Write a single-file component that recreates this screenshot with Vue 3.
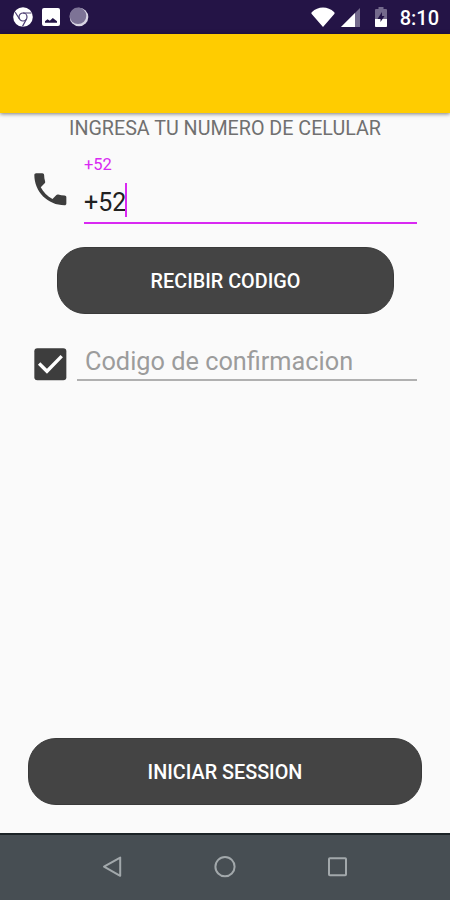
<template>
  <div class="screen">
    <header class="status-bar">
      <div class="status-left">
        <svg width="20" height="20" viewBox="0 0 20 20">
          <circle cx="10" cy="10" r="9.8" fill="#fff" />
          <g fill="none" stroke="#4b3c70" stroke-width="1.2">
            <circle cx="10" cy="10" r="4" />
            <path d="M10 6h8.5M6.5 12L2.2 5.2M13.5 12l-4 7.4" />
          </g>
        </svg>
        <svg width="18" height="18" viewBox="0 0 18 18">
          <rect width="18" height="18" rx="2" fill="#fff" />
          <path d="M3 14.8v-1.500l2.500-2 2.300 1.400 3-2.700 4.200 3.300v1.500z" fill="#241446" />
        </svg>
        <svg width="20" height="20" viewBox="0 0 20 20">
          <circle cx="10" cy="10" r="9.3" fill="#d9d5e4" />
          <circle cx="9" cy="8.8" r="8.3" fill="#7d7396" />
        </svg>
      </div>
      <div class="status-right">
        <svg class="wifi" width="24" height="20" viewBox="0 0 24 20">
          <path
            d="M12 20L.7 7C.2 6.300.3 5.500 1 4.900 4 1.900 7.800.4 12 .4s8 1.500 11 4.500c.7.6.8 1.400.3 2.100z"
            fill="#fff"
          />
        </svg>
        <svg class="signal" width="19" height="19" viewBox="0 0 19 19">
          <path d="M0 19L19 0v19z" fill="#746a8c" />
          <path d="M0 19L14 5V19z" fill="#fff" />
        </svg>
        <svg class="battery" width="12" height="20" viewBox="0 0 12 20">
          <path d="M3.5 0h5v2H11a1 1 0 011 1v16a1 1 0 01-1 1H1a1 1 0 01-1-1V3a1 1 0 011-1h2.5z" fill="#746a8c" />
          <path d="M0 12h12v7a1 1 0 01-1 1H1a1 1 0 01-1-1z" fill="#fff" />
          <path d="M7 5l-4.500 7H5.500v3l4-6H7z" fill="#241446" />
        </svg>
        <span class="clock">8:10</span>
      </div>
    </header>

    <div class="app-bar"></div>

    <main class="content">
      <h1 class="title">INGRESA TU NUMERO DE CELULAR</h1>

      <div class="phone-row">
        <svg class="row-icon" viewBox="0 0 24 24">
          <path
            fill="#3d3d3d"
            d="M6.62 10.79c1.44 2.83 3.76 5.14 6.59 6.59l2.2-2.2c.27-.27.67-.36 1.02-.24 1.12.37 2.33.57 3.57.57.55 0 1 .45 1 1V20c0 .55-.45 1-1 1-9.39 0-17-7.61-17-17 0-.55.45-1 1-1h3.5c.55 0 1 .45 1 1 0 1.25.2 2.45.57 3.57.11.35.03.74-.25 1.02l-2.2 2.2z"
          />
        </svg>
        <div class="phone-field">
          <label class="phone-label">{{ prefix }}</label>
          <div class="phone-value">
            <span>{{ phone }}</span><i class="caret"></i>
          </div>
        </div>
      </div>

      <button class="btn btn-receive">RECIBIR CODIGO</button>

      <div class="code-row">
        <svg class="row-icon" viewBox="0 0 24 24">
          <rect x="3" y="3" width="18" height="18" rx="1.7" fill="#3d3d3d" />
          <path d="M5.7 11.500l4.400 4.400 8.300-8.500" fill="none" stroke="#fff" stroke-width="1.9" />
        </svg>
        <input v-model="code" class="code-input" type="text" placeholder="Codigo de confirmacion" />
      </div>

      <button class="btn btn-login">INICIAR SESSION</button>
    </main>

    <nav class="nav-bar">
      <svg width="22" height="22" viewBox="0 0 22 22">
        <path d="M18.200 1.600v18.200L2 10.700z" />
      </svg>
      <svg width="22" height="22" viewBox="0 0 22 22">
        <circle cx="11" cy="10.7" r="9.6" />
      </svg>
      <svg width="22" height="22" viewBox="0 0 22 22">
        <rect x="2" y="2.2" width="17" height="17" rx=".8" />
      </svg>
    </nav>
  </div>
</template>

<script setup>
import { ref } from 'vue'

const prefix = '+52'
const phone = ref('+52')
const code = ref('')
</script>

<style>
body {
  margin: 0;
}
</style>

<style scoped>
.screen {
  display: flex;
  flex-direction: column;
  width: 450px;
  height: 900px;
  overflow: hidden;
  background: #fafafa;
  font-family: Roboto, "Liberation Sans", sans-serif;
}

svg {
  display: block;
  flex: none;
}

.status-bar {
  display: flex;
  justify-content: space-between;
  flex: none;
  box-sizing: border-box;
  height: 34px;
  padding: 0 11px 0 13px;
  background: #241446;
}

.status-left,
.status-right {
  display: flex;
  align-items: center;
}

.status-left {
  gap: 9px;
}

.signal {
  margin-left: 6px;
}

.battery {
  margin: 0 13px 0 15px;
}

.clock {
  color: #fff;
  font-size: 20px;
  font-weight: 500;
  line-height: 34px;
  padding-top: 2px;
}

.app-bar {
  position: relative;
  flex: none;
  height: 79px;
  background: #ffcc00;
  box-shadow: 0 1px 4px rgba(0, 0, 0, 0.5);
}

.content {
  display: flex;
  flex-direction: column;
  flex: 1;
  min-height: 0;
}

.title {
  margin: 4px 0 0;
  height: 23px;
  color: #707070;
  font-size: 19.7px;
  font-weight: 400;
  line-height: 24px;
  text-align: center;
  white-space: nowrap;
}

.row-icon {
  width: 42.7px;
  height: 42.7px;
}

.phone-row {
  display: flex;
  gap: 12.7px;
  height: 84px;
  padding: 0 33px 0 28.6px;
}

.phone-row .row-icon {
  margin-top: 27.7px;
}

.phone-field {
  flex: 1;
  box-sizing: border-box;
  height: 83.5px;
  border-bottom: 2px solid #d929f2;
}

.phone-label {
  display: block;
  margin-top: 15px;
  height: 20px;
  color: #d929f2;
  font-size: 16.5px;
  line-height: 20px;
}

.phone-value {
  display: flex;
  align-items: center;
  height: 34px;
  margin-top: 8px;
  color: #212121;
  font-size: 25px;
}

.phone-value span {
  padding-top: 5px;
}

.caret {
  width: 2px;
  height: 34px;
  margin-left: -1px;
  background: #d929f2;
}

.btn {
  flex: none;
  height: 67px;
  padding: 2px 0 0;
  border: 1px solid #3a3a3a;
  border-radius: 28px;
  background: #444;
  color: #fff;
  font-family: inherit;
  font-size: 19.8px;
  font-weight: 500;
  line-height: 24px;
}

.btn-receive {
  margin: 23px 56px 0 57px;
}

.code-row {
  display: flex;
  gap: 5.7px;
  height: 58px;
  margin-top: 9px;
  padding: 0 33px 0 28.6px;
}

.code-row .row-icon {
  margin-top: 19.7px;
}

.code-input {
  flex: 1;
  min-width: 0;
  box-sizing: border-box;
  height: 58px;
  padding: 20px 8px 0;
  border: none;
  border-bottom: 2px solid #b0b0b0;
  background: transparent;
  color: #212121;
  font-family: inherit;
  font-size: 25.3px;
  outline: none;
}

.code-input::placeholder {
  color: #9c9c9c;
}

.btn-login {
  margin: auto 28px 28px;
}

.nav-bar {
  display: flex;
  justify-content: center;
  align-items: center;
  flex: none;
  gap: 90.5px;
  box-sizing: border-box;
  height: 67px;
  padding-bottom: 2px;
  border-top: 2px solid #1c2326;
  background: #474e53;
}

.nav-bar svg {
  fill: none;
  stroke: #a2a8ab;
  stroke-width: 2;
  stroke-linejoin: round;
}
</style>
